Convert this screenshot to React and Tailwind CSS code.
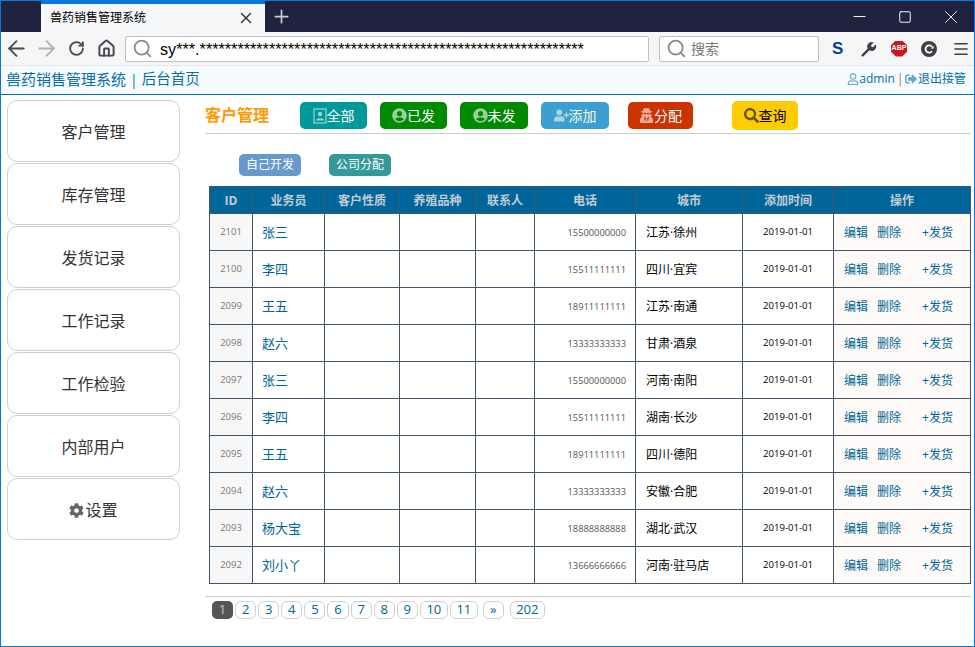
import React from "react";
import { FaUserCircle, FaUserPlus, FaUserSecret, FaSearch, FaCog, FaRegUser, FaSignOutAlt } from "react-icons/fa";
import { ArrowLeft, ArrowRight, RotateCw, House, Search, Plus, X, Minus, Square, Menu } from "lucide-react";

const FONT = "font-['Open_Sans','Noto_Sans_CJK_SC',sans-serif]";
const nav = ["客户管理", "库存管理", "发货记录", "工作记录", "工作检验", "内部用户"];
const cols = [43, 72, 75, 76, 59, 101, 107, 91, 137];
const heads = ["ID", "业务员", "客户性质", "养殖品种", "联系人", "电话", "城市", "添加时间", "操作"];
const rows = [
  ["2101", "张三", "15500000000", "江苏·徐州"],
  ["2100", "李四", "15511111111", "四川·宜宾"],
  ["2099", "王五", "18911111111", "江苏·南通"],
  ["2098", "赵六", "13333333333", "甘肃·酒泉"],
  ["2097", "张三", "15500000000", "河南·南阳"],
  ["2096", "李四", "15511111111", "湖南·长沙"],
  ["2095", "王五", "18911111111", "四川·德阳"],
  ["2094", "赵六", "13333333333", "安徽·合肥"],
  ["2093", "杨大宝", "18888888888", "湖北·武汉"],
  ["2092", "刘小丫", "13666666666", "河南·驻马店"],
];
const pages = ["2", "3", "4", "5", "6", "7", "8", "9", "10", "11"];

function BookIcon() {
  return (
    <svg width="14" height="16" viewBox="0 0 14 16" fill="none">
      <rect x="1" y="1" width="12" height="14" stroke="currentColor" strokeWidth="1.2" />
      <circle cx="7" cy="6" r="2.2" fill="currentColor" />
      <path d="M3 12.5 C3 9.5 11 9.5 11 12.5 Z" fill="currentColor" />
    </svg>
  );
}

function WrenchIcon() {
  return (
    <svg width="16" height="16" viewBox="0 0 16 16">
      <path d="M1.6 14.4 L8.6 7.4" stroke="currentColor" strokeWidth="2.3" strokeLinecap="round" />
      <path d="M7.3 8.2 A4.3 4.3 0 0 1 12.6 1.6 L10 4.2 L10.4 5.8 L12 6.2 L14.7 3.6 A4.3 4.3 0 0 1 8.6 9.2 Z" fill="currentColor" />
    </svg>
  );
}

function ReloadC() {
  return (
    <svg width="16" height="16" viewBox="0 0 16 16" fill="none">
      <circle cx="8" cy="8" r="8" fill="#3f3f44" />
      <path d="M11 10.2 A3.6 3.6 0 1 1 11 5.8" stroke="#fff" strokeWidth="1.8" />
      <path d="M9.6 7.6 H12.6 V5" fill="#fff" />
    </svg>
  );
}

function Btn({ icon, label, cls }) {
  return (
    <div className={`h-[27px] rounded-[5px] flex items-center justify-center text-[14px] ${cls}`}>
      <span className="flex items-center opacity-60 text-[15px]">{icon}</span>
      <span>{label}</span>
    </div>
  );
}

export default function App() {
  return (
    <div className={`w-[975px] h-[647px] overflow-hidden bg-white border border-[#0a78d7] flex flex-col ${FONT}`}>
      {/* title bar */}
      <div className="h-[31px] shrink-0 bg-[#20233f] flex items-stretch">
        <div className="w-[40px]" />
        <div className="w-[224px] h-[31px] bg-[#f7f8f9] border-t-[3px] border-[#0a78e0] flex items-center pl-[9px] pr-[10px] justify-between">
          <span className="text-[12px] text-black">兽药销售管理系统</span>
          <X size={18} className="text-[#3a3a3a]" strokeWidth={2} />
        </div>
        <div className="w-[32px] flex items-center justify-center">
          <Plus size={21} className="text-[#c9cad2]" strokeWidth={2} />
        </div>
        <div className="flex-1" />
        <div className="flex items-center text-white">
          <div className="w-[46px] flex justify-center"><Minus size={19} strokeWidth={1.2} /></div>
          <div className="w-[46px] flex justify-center"><Square size={14} strokeWidth={1.6} /></div>
          <div className="w-[46px] flex justify-center"><X size={22} strokeWidth={1} /></div>
        </div>
      </div>
      {/* nav bar */}
      <div className="h-[33px] shrink-0 bg-[#f5f6f7] flex items-center">
        <div className="w-[124px] flex items-center text-[#4a4a4f]">
          <ArrowLeft size={25} strokeWidth={1.7} className="ml-[3px]" />
          <ArrowRight size={25} strokeWidth={1.7} className="ml-[5px] text-[#b1b1b3]" />
          <RotateCw size={17} strokeWidth={2.6} className="ml-[9px]" />
          <House size={19} strokeWidth={2.5} className="ml-[12px]" />
        </div>
        <div className="w-[524px] h-[26px] bg-white border border-[#c0c0c0] rounded-[2px] flex items-center pl-[6px]">
          <Search size={21} className="text-[#8a8a8a]" strokeWidth={2} />
          <span className="ml-[7px] text-[16.2px] leading-[26px] text-black font-['Liberation_Sans',sans-serif]">sy***.*************************************************************</span>
        </div>
        <div className="w-[160px] h-[26px] ml-[10px] bg-white border border-[#c0c0c0] rounded-[2px] flex items-center pl-[6px]">
          <Search size={21} className="text-[#8a8a8a]" strokeWidth={2} />
          <span className="ml-[4px] text-[14px] text-[#777]">搜索</span>
        </div>
        <div className="flex items-center flex-1 text-[#3f3f44]">
          <span className="ml-[13px] w-[14px] text-[17px] font-bold text-[#0b3c94] leading-none font-['Liberation_Sans',sans-serif]">S</span>
          <div className="ml-[15px]"><WrenchIcon /></div>
          <div className="ml-[14px] w-[16px] h-[16px] bg-[#c8161d] [clip-path:polygon(30%_0,70%_0,100%_30%,100%_70%,70%_100%,30%_100%,0_70%,0_30%)] flex items-center justify-center text-white text-[7px] font-bold font-['Liberation_Sans',sans-serif]">ABP</div>
          <div className="ml-[14px]"><ReloadC /></div>
          <Menu size={18} strokeWidth={2.2} className="ml-[15px]" />
        </div>
      </div>
      {/* page header */}
      <div className="h-[30px] shrink-0 bg-[#f5fbff] border-b border-[#0a6ea5] border-t border-t-[#e4e6e8] flex items-center justify-between pl-[5px] pr-[8px] pb-[2px] text-[#0a6ea5]">
        <div className="text-[15px] flex items-center">
          <span>兽药销售管理系统</span>
          <span className="mx-[4px] text-[14px]">|</span>
          <span className="text-[14.5px]">后台首页</span>
        </div>
        <div className="text-[12px] flex items-center">
          <FaRegUser size={12} className="opacity-60" />
          <span>admin</span>
          <span className="ml-[2px] mr-[1px] text-[13px] text-[#c87a20]">|</span>
          <FaSignOutAlt size={12} className="opacity-60 mr-[1px]" />
          <span>退出接管</span>
        </div>
      </div>
      {/* body */}
      <div className="flex-1 flex min-h-0">
        <div className="w-[204px] shrink-0 pl-[6px] pt-[5px] flex flex-col gap-[1px]">
          {nav.map((n) => (
            <div key={n} className="w-[173px] h-[62px] pt-[2px] bg-white border border-[#cfcfcf] rounded-[10px] flex items-center justify-center text-[16px] text-[#333]">{n}</div>
          ))}
          <div className="w-[173px] h-[62px] pt-[2px] bg-white border border-[#cfcfcf] rounded-[10px] flex items-center justify-center text-[16px] text-[#333]">
            <FaCog size={15} className="text-[#666]" />
            <span className="ml-[1px]">设置</span>
          </div>
        </div>
        <div className="flex-1 min-w-0 pr-[3px]">
          <div className="h-[39px] border-b border-[#cccccc] flex items-start pt-[7px]">
            <div className="w-[95px] text-[16px] leading-[27px] font-bold text-[#ff9900]">客户管理</div>
            <Btn icon={<BookIcon />} label="全部" cls="w-[67px] bg-[#009999] text-white" />
            <Btn icon={<FaUserCircle />} label="已发" cls="w-[67px] ml-[13px] bg-[#008a00] text-white" />
            <Btn icon={<FaUserCircle />} label="未发" cls="w-[68px] ml-[13px] bg-[#008a00] text-white" />
            <Btn icon={<FaUserPlus />} label="添加" cls="w-[68px] ml-[13px] bg-[#3b9fd1] text-[#f4fbe8]" />
            <Btn icon={<FaUserSecret />} label="分配" cls="w-[65px] ml-[19px] bg-[#cc3300] text-white" />
            <Btn icon={<FaSearch />} label="查询" cls="w-[66px] h-[29px] ml-[39px] -mt-[1px] bg-[#ffcc00] text-black" />
          </div>
          <div className="flex pt-[20px] pl-[34px] gap-[28px]">
            <div className="w-[62px] h-[22px] rounded-[5px] bg-[#6699cc] text-white text-[12px] flex items-center justify-center">自己开发</div>
            <div className="w-[62px] h-[22px] rounded-[5px] bg-[#339999] text-white text-[12px] flex items-center justify-center">公司分配</div>
          </div>
          <div className="pl-[4px] pt-[10px]">
            <table className="table-fixed border-collapse w-[761px]">
              <colgroup>
                {cols.map((w, i) => <col key={i} style={{ width: w }} />)}
              </colgroup>
              <thead>
                <tr className="h-[27px] bg-[#006699]">
                  {heads.map((h) => (
                    <th key={h} className="border border-[#44546a] text-[12px] font-bold text-[#c4ccd4] text-center p-0 pt-[1px]">{h}</th>
                  ))}
                </tr>
              </thead>
              <tbody>
                {rows.map((r) => (
                  <tr key={r[0]} className="h-[37px]">
                    <td className="border border-[#44546a] bg-[#f7f7f7] text-[9.5px] text-[#777] text-center p-0 pt-[1px]">{r[0]}</td>
                    <td className="border border-[#44546a] text-[13px] text-[#006699] p-0 pl-[9px] pt-[1px]">{r[1]}</td>
                    <td className="border border-[#44546a] p-0" />
                    <td className="border border-[#44546a] p-0" />
                    <td className="border border-[#44546a] p-0" />
                    <td className="border border-[#44546a] text-[9.3px] text-[#555] text-right p-0 pr-[9px] pt-[1px]">{r[2]}</td>
                    <td className="border border-[#44546a] text-[12px] text-black p-0 pl-[10px] pt-[1px]">{r[3]}</td>
                    <td className="border border-[#44546a] text-[9.6px] text-black text-center p-0 pt-[1px]">2019-01-01</td>
                    <td className="border border-[#44546a] bg-[#fdfaf7] text-[12px] text-[#006699] p-0 pt-[1px]">
                      <div className="flex pl-[10px]">
                        <span>编辑</span>
                        <span className="ml-[9px]">删除</span>
                        <span className="ml-[21px]">+发货</span>
                      </div>
                    </td>
                  </tr>
                ))}
              </tbody>
            </table>
          </div>
          <div className="mt-[12px] border-t border-[#cccccc] pt-[4px] pl-[7px] flex items-center text-[#006699] text-[13px]">
            <div className="w-[21.1px] h-[18px] rounded-[5px] bg-[#555] text-[#ccc] flex items-center justify-center mr-[2px]">1</div>
            {pages.map((p) => (
              <div key={p} className={`${p.length > 1 ? "w-[28px]" : "w-[21.1px]"} h-[18px] rounded-[6px] border border-[#cfcfcf] flex items-center justify-center mr-[2px]`}>{p}</div>
            ))}
            <div className="w-[21px] h-[18px] rounded-[6px] border border-[#cfcfcf] flex items-center justify-center ml-[3px]">»</div>
            <div className="w-[35px] h-[18px] rounded-[6px] border border-[#cfcfcf] flex items-center justify-center ml-[6px]">202</div>
          </div>
        </div>
      </div>
    </div>
  );
}
